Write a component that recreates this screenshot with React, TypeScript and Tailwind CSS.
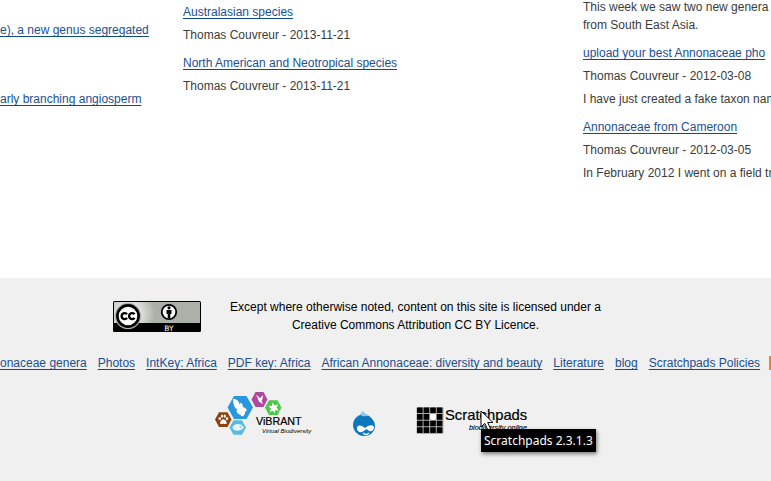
import type { ReactNode } from 'react';

function TextLink({ children }: { children: ReactNode }) {
  return (
    <a
      href="#"
      className="whitespace-nowrap text-[#1b4f8f] underline decoration-[#0f4a8f] decoration-1 underline-offset-2 [text-decoration-skip-ink:none]"
    >
      {children}
    </a>
  );
}

function Entry({ title, by, children }: { title: string; by: string; children?: ReactNode }) {
  return (
    <li className="space-y-[5px]">
      <h3>
        <TextLink>{title}</TextLink>
      </h3>
      <p>{by}</p>
      {children && <p>{children}</p>}
    </li>
  );
}

function LicenceBadge() {
  return (
    <svg width="88" height="31" viewBox="0 0 88 31" role="img" aria-label="Creative Commons BY">
      <defs>
        <radialGradient id="glow" gradientUnits="userSpaceOnUse" cx="16" cy="13" r="26">
          <stop offset="0.4" stopColor="#e4e6e3" />
          <stop offset="1" stopColor="#abb1a9" />
        </radialGradient>
      </defs>
      <rect width="88" height="31" rx="1.5" fill="#000" />
      <rect x="1" y="1" width="86" height="21" fill="url(#glow)" />
      <circle cx="15" cy="15" r="13.2" fill="#abb1a9" />
      <circle cx="15" cy="15" r="10.6" fill="#fff" stroke="#000" strokeWidth="2.6" />
      <g fill="none" stroke="#000" strokeWidth="2.4">
        <path d="M14 13.3a3 3 0 1 0 0 3.6M21.500 13.300a3 3 0 1 0 0 3.600" />
      </g>
      <circle cx="56" cy="11" r="7.200" fill="#fff" stroke="#000" strokeWidth="1.800" />
      <circle cx="56" cy="6.800" r="1.600" />
      <path d="M53.500 9h5v4h-1.200v4h-2.600v-4h-1.200z" />
      <text x="56" y="29.500" textAnchor="middle" fill="#fff" fontSize="7.500" fontFamily="DejaVu Sans, sans-serif">
        BY
      </text>
    </svg>
  );
}

function VibrantLogo() {
  return (
    <svg width="98" height="46" viewBox="0 0 98 46" role="img" aria-label="ViBRANT Virtual Biodiversity">
      <path d="M12.500 15.500 19 4h12.500L38 15.500 31.500 27H19z" fill="#2997df" />
      <path d="M36.500 7.500 40.500 0h8l4 7.500-4 7.500h-8z" fill="#ad489f" />
      <path d="M50 15.500 54 8.300h8.500l4 7.200-4 7.500H54z" fill="#4bc94b" />
      <path d="M0 27.500 4 20.300h8.500l4 7.200-4 7.500H4z" fill="#8b4310" />
      <path d="M14.500 35.500 18.500 28.300h8.500l4 7.200-4 7.300h-8.500z" fill="#5bb8df" />
      <path
        d="M18 7c3-.2 5 1 6 3.600l.6 1.800 1-1.600c1.800.8 2.400 2.400 2.200 4.200 1.800.3 3.200 1.500 4.200 3.300-1.500.8-2 1.800-2 3.100-.5 1.600-1.800 2.600-3 3.200-.8-1.500-2-2.200-3.400-2.700-2-.8-2.500-2.600-1.500-4.300-2.800-2.200-4.300-6-4.100-10.600z"
        fill="#fff"
      />
      <path d="M40.500 3c2.200.5 3.600 1.800 4.300 3.400l3-3.400c.2 2.800-.3 4.400-1.200 5.800l1.400 3.400-3-2c-1.400-.8-1.800-2-2-3.400-.4-1.600-1.300-2.800-2.500-3.800z" fill="#fff" />
      <path d="M53.500 13.700l3.500.2.300-3.400 2.400 3 3.500-1.200-1.700 3.200 2.200 3.200-3.400-.8-.5 3.200-2-2.400-3.200 1.300 1.400-3.300z" fill="#fff" />
      <g fill="#fff">
        <ellipse cx="4.800" cy="26.500" rx="1.200" ry="1.600" />
        <ellipse cx="7.100" cy="24.100" rx="1.100" ry="1.600" />
        <ellipse cx="9.800" cy="24.100" rx="1.100" ry="1.600" />
        <ellipse cx="12" cy="26.500" rx="1.200" ry="1.600" />
        <path d="M8.400 27.300c1.500 0 3.400 2.300 3.400 3.600s-2 1.400-3.400.6c-1.300.8-3.300.8-3.300-.6s1.800-3.600 3.300-3.600z" />
      </g>
      <path d="M17.500 35c2-4 8.500-4 11.500.5-3 4-9 4-11 1.500z" fill="#e5f4fa" />
      <circle cx="25.500" cy="35" r="0.800" fill="#5bb8df" />
      <text x="41" y="33" fontSize="10.700" fill="#000" fontFamily="Liberation Sans, Arial, sans-serif" stroke="#000" strokeWidth="0.200">
        ViBRANT
      </text>
      <text x="47" y="41" fontSize="6" fontStyle="italic" fill="#000" fontFamily="Liberation Sans, Arial, sans-serif">
        Virtual Biodiversity
      </text>
    </svg>
  );
}

function DrupalLogo() {
  return (
    <svg width="24" height="26" viewBox="0 0 24 26" role="img" aria-label="Drupal">
      <path d="M10.500 0c1 3 4 3 6.500 5 4 3 6 6 6 10 0 6-5 10-11 10S1 20 1 14c0-4 2-7 5-9 2-1 4-2 4.500-5z" fill="#0d77bd" />
      <path d="M10.500 0c1 3 4 3 6.500 5-3 0-7 1-9-1.500 1-1 2-2 2.500-3.500z" fill="#8fcbec" />
      <path d="M5 18c-1-4 4-5 8-1 3-3 8-4 9-1 0 4-3 5-5 4-2-2-3-2-4-1-3 3-7 3-8-1z" fill="#fff" />
      <path d="M11 22c2 2 4 2 6 0" fill="none" stroke="#fff" strokeWidth="1.200" />
    </svg>
  );
}

function ScratchpadsLogo() {
  const cells = [0, 1, 2, 3].flatMap((row) => [0, 1, 2, 3].map((col) => ({ row, col })));
  return (
    <svg width="114" height="30" viewBox="0 0 114 30" role="img" aria-label="Scratchpads biodiversity online">
      <rect x="0.500" y="1" width="27" height="27" rx="1.500" fill="#aaa" />
      {cells.map(({ row, col }) => (
        <rect
          key={`${row}-${col}`}
          x={1 + col * 6.6}
          y={1.5 + row * 6.6}
          width="5.6"
          height="5.6"
          rx="0.5"
          fill={row === 1 && col === 2 ? '#fff' : '#000'}
        />
      ))}
      <text x="29" y="14" fontSize="14.800" fill="#000" stroke="#000" strokeWidth="0.200" fontFamily="Liberation Sans, Arial, sans-serif">
        Scratchpads
      </text>
      <text x="111" y="24" textAnchor="end" fontSize="7.300" fontStyle="italic" fill="#000" stroke="#000" strokeWidth="0.100" fontFamily="Liberation Sans, Arial, sans-serif">
        biodiversity online
      </text>
    </svg>
  );
}

const footerLinks = [
  'onaceae genera',
  'Photos',
  'IntKey: Africa',
  'PDF key: Africa',
  'African Annonaceae: diversity and beauty',
  'Literature',
  'blog',
  'Scratchpads Policies',
];

export default function App() {
  return (
    <div className="flex min-h-screen flex-col overflow-hidden bg-white font-['Liberation_Sans',Arial,sans-serif] text-[12px] leading-[18px] text-[#3b3b3b]">
      <main className="flex overflow-hidden pb-[96px]">
        <ul className="w-[183px] shrink-0 space-y-[51px] pt-[21px]">
          <li>
            <TextLink>e), a new genus segregated</TextLink>
          </li>
          <li>
            <TextLink>arly branching angiosperm</TextLink>
          </li>
        </ul>
        <ul className="w-[400px] shrink-0 space-y-[10px] pt-[3px]">
          <Entry title="Australasian species" by="Thomas Couvreur - 2013-11-21" />
          <Entry title="North American and Neotropical species" by="Thomas Couvreur - 2013-11-21" />
        </ul>
        <div className="-mt-[2px] min-w-0 grow space-y-[10px] whitespace-nowrap">
          <p>
            This week we saw two new genera
            <br />
            from South East Asia.
          </p>
          <ul className="space-y-[10px]">
            <Entry title="upload your best Annonaceae pho" by="Thomas Couvreur - 2012-03-08">
              I have just created a fake taxon nam
            </Entry>
            <Entry title="Annonaceae from Cameroon" by="Thomas Couvreur - 2012-03-05">
              In February 2012 I went on a field tr
            </Entry>
          </ul>
        </div>
      </main>

      <footer className="grow bg-[#f0f0f0] pt-[20px] text-black">
        <div className="flex items-center gap-[26px] pl-[113px]">
          <a href="#" className="shrink-0 pt-[1px]">
            <LicenceBadge />
          </a>
          <p className="w-[377px] text-center">
            Except where otherwise noted, content on this site is licensed under a
            <br />
            Creative Commons Attribution CC BY Licence.
          </p>
        </div>
        <nav className="flex gap-[11px] overflow-hidden pt-[20px]">
          {footerLinks.map((label) => (
            <TextLink key={label}>{label}</TextLink>
          ))}
          <a href="#" aria-label="RSS feed" className="-ml-0.5 mt-[2px] h-[14px] w-[14px] shrink-0 bg-[#e8833a]" />
        </nav>
        <div className="flex items-start pl-[215px] pt-[20px]">
          <VibrantLogo />
          <div className="ml-[39px] mt-[19px]">
            <DrupalLogo />
          </div>
          <div className="relative ml-[40px] mt-[14px]">
            <ScratchpadsLogo />
            <svg className="absolute left-[64px] top-[4px]" width="14" height="22" viewBox="0 0 14 22" aria-hidden="true">
              <path d="M1 1v16l3.800-3.600 3 6.600 2.800-1.300-2.900-6.200H13z" fill="#fff" stroke="#000" />
            </svg>
            <div
              role="tooltip"
              className="absolute left-[65px] top-[23px] whitespace-nowrap bg-black px-[3px] py-[2px] font-['Noto_Sans',sans-serif] text-[12px] leading-[19px] text-white shadow-[1px_2px_4px_rgba(0,0,0,0.5)]"
            >
              Scratchpads 2.3.1.3
            </div>
          </div>
        </div>
      </footer>
    </div>
  );
}
